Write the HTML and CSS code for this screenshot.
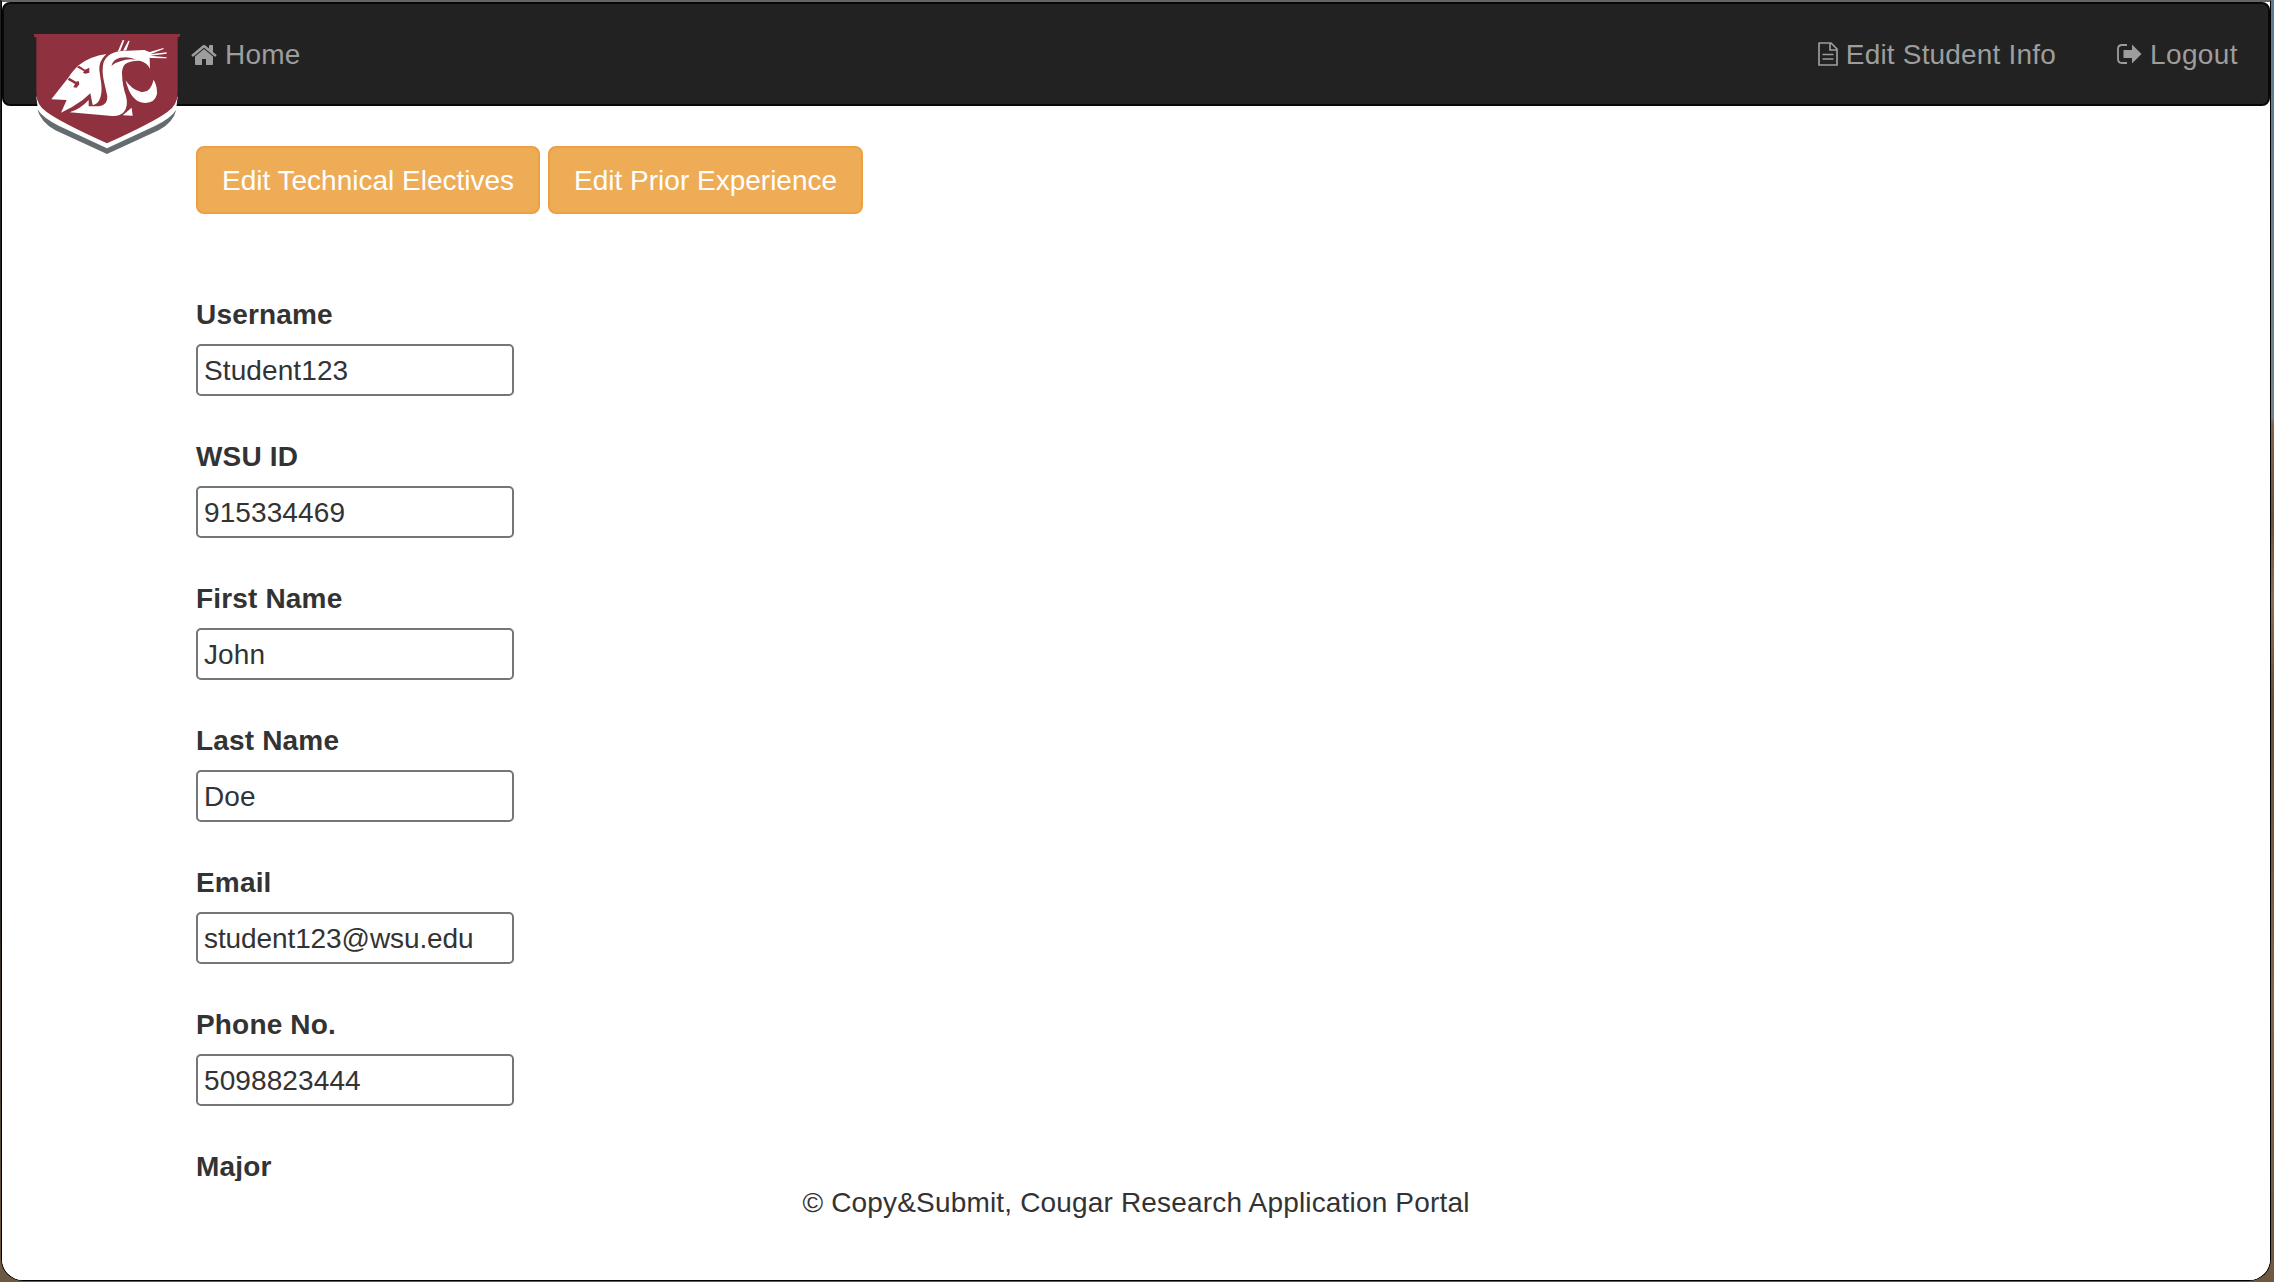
FILE: index.html
```html
<!DOCTYPE html>
<html lang="en">
<head>
<meta charset="utf-8">
<title>Edit Student Info</title>
<link rel="stylesheet" href="styles.css">
</head>
<body>
<div class="window">
  <nav class="navbar">
    <a class="brand" href="#">
      <svg class="logo" viewBox="0 0 465 405">
        <path fill="#fff" d="M19 215L24 255Q60 310 232 374Q402 310 438 255L443 215Z"/>
        <path fill="#90313f" d="M12 27H450V35L443 37V203Q443 240 412 261Q370 292 231 355Q92 292 50 261Q19 240 19 203V37L12 35Z"/>
        <path fill="#656c70" d="M22 253Q40 280 86 302L231 370L376 302Q422 280 439 254Q430 292 386 316L231 387L76 316Q32 292 22 253Z"/>
        <g fill="#fff">
          <path d="M64 223L116 157Q126 139 147 120Q180 94 229 87Q206 109 208 135L214 178Q217 207 208 225Q201 238 188 240L181 205L158 225Q130 246 93 263L110 225Z"/>
          <path d="M263 80L278 45L283 46L271 77ZM279 77L295 47L299 48L289 76Z"/>
          <path d="M244 86Q262 76 292 77L343 75L360 82L359 101L360 131Q352 113 329 107Q300 106 285 118Q276 127 276 146Q277 181 288 213Q296 244 281 262Q270 274 247 273L119 262Q150 253 176 225V244H207Q233 242 232 214L222 170Q214 136 221 111Q228 94 244 86Z"/>
          <path d="M287 166Q304 194 334 201Q361 205 371 164Q382 183 381 207Q375 233 346 234Q302 233 287 166ZM278 271L305 248L308 272Z"/>
          <path d="M352 83L400 69L401 72L361 88L410 82V86L361 92L410 97V100L360 99Z"/>
        </g>
        <g fill="#90313f">
          <path d="M244 123Q248 104 270 98Q300 93 318 104Q289 101 274 108Q254 113 244 123Z"/>
          <path d="M113 164L118 158L138 170L146 168L148 178L140 188L130 187L135 177Z"/>
          <path d="M141 127L147 122L165 134L178 128V143L167 146L159 144L162 139Z"/>
        </g>
      </svg>
    </a>
    <a class="nav-link home" href="#">
      <svg class="icon-home" viewBox="0 0 1664 1792"><path d="M1408 992v480q0 26-19 45t-45 19h-384v-384h-256v384h-384q-26 0-45-19t-19-45v-480q0-1 .5-3t.5-3l575-474 575 474q1 2 1 6zm223-69l-62 74q-8 9-21 11h-3q-13 0-21-7l-692-577-692 577q-12 8-24 7-13-2-21-11l-62-74q-8-10-7-23.5t11-21.5l719-599q32-26 76-26t76 26l244 204v-195q0-14 9-23t23-9h192q14 0 23 9t9 23v408l219 182q10 8 11 21.5t-7 23.5z"/></svg>
      <span>Home</span>
    </a>
    <div class="nav-right">
      <a class="nav-link" href="#">
        <svg class="icon-file" viewBox="0 0 20 24"><path fill="none" stroke="currentColor" stroke-width="1.7" stroke-linejoin="round" d="M1 1h12l6 6v16H1zM12 1v7h7M4.500 12.500h11M4.500 17h11"/></svg>
        <span>Edit Student Info</span>
      </a>
      <a class="nav-link" href="#">
        <svg class="icon-out" viewBox="0 0 25 20"><path fill="none" stroke="currentColor" stroke-width="1.8" d="M10 1H5Q1 1 1 5v10q0 4 4 4h5"/><path d="M6.500 6h8.500V.5l9.500 9.500-9.500 9.500v-5.500H6.500z"/></svg>
        <span class="logout">Logout</span>
      </a>
    </div>
  </nav>
  <main class="content">
    <div class="actions">
      <a class="btn" href="#">Edit Technical Electives</a>
      <a class="btn" href="#">Edit Prior Experience</a>
    </div>
    <form class="fields">
      <div class="field"><label for="username">Username</label><input id="username" value="Student123"></div>
      <div class="field"><label for="wsuid">WSU ID</label><input id="wsuid" value="915334469"></div>
      <div class="field"><label for="first">First Name</label><input id="first" value="John"></div>
      <div class="field"><label for="last">Last Name</label><input id="last" value="Doe"></div>
      <div class="field"><label for="email">Email</label><input id="email" class="email" value="student123@wsu.edu"></div>
      <div class="field"><label for="phone">Phone No.</label><input id="phone" value="5098823444"></div>
      <div class="field"><label>Major</label></div>
    </form>
  </main>
  <footer class="footer">© Copy&amp;Submit, Cougar Research Application Portal</footer>
</div>
</body>
</html>
```
FILE: styles.css
```css
* { box-sizing: border-box; }

body {
  margin: 0;
  height: 1282px;
  padding: 0 3px 1px 1px;
  overflow: hidden;
  background:
    linear-gradient(#222 0, #2b2622 900px, #6d5942 1230px) left / 1px 100% no-repeat,
    linear-gradient(#5f7b91 0, #72848b 418px, #80664f 424px, #6b543d 520px, #8a7150 600px, #66503a 700px, #80664a 1000px, #6d5942 1282px);
  font: 28px/40px "Liberation Sans", Arial, sans-serif;
  color: #333;
}

.window {
  display: flex;
  flex-direction: column;
  height: 1281px;
  overflow: hidden;
  background: #fff;
  border: 1px solid #000;
  border-top: 2px solid #666;
  border-radius: 0 0 22px 22px;
}

.navbar {
  display: flex;
  flex: none;
  height: 104px;
  background: #222;
  border: 2px solid #080808;
  border-radius: 8px;
}

.brand {
  width: 155px;
  height: 135px;
  margin: 21px 0 0 26px;
}

.logo { display: block; width: 155px; height: 135px; }

.nav-link {
  display: flex;
  align-items: center;
  height: 40px;
  margin-top: 30px;
  color: #9d9d9d;
  text-decoration: none;
  letter-spacing: 0.18px;
  white-space: nowrap;
}

.nav-link span { padding-top: 2px; }
.nav-link svg { fill: currentColor; }
.home { margin-left: 6px; }
.icon-home { width: 26px; height: 28px; margin: 2px 8px 0 0; }
.icon-file { width: 20px; height: 24px; margin-right: 8px; }
.icon-out { width: 25px; height: 20px; margin-right: 8px; }
.nav-link .logout { letter-spacing: 0.4px; }

.nav-right {
  display: flex;
  gap: 61px;
  margin-left: auto;
  padding-right: 30px;
}

.content {
  flex: 1;
  min-height: 0;
  padding: 40px 194px 0;
  overflow: hidden;
}

.actions { display: flex; gap: 8px; }

.btn {
  height: 68px;
  padding: 13px 24px 11px;
  border: 2px solid #eca041;
  border-radius: 8px;
  background: #eeac57;
  color: #fff;
  text-decoration: none;
}

.fields { margin-top: 80px; }

.field { height: 142px; }

label {
  display: block;
  height: 40px;
  margin-bottom: 10px;
  padding-top: 1px;
  font-weight: bold;
  letter-spacing: 0.17px;
}

input {
  display: block;
  width: 318px;
  height: 52px;
  padding: 4px 6px 2px;
  border: 2px solid #767676;
  border-radius: 5px;
  font: inherit;
  letter-spacing: 0.1px;
  color: inherit;
}

.email { letter-spacing: -0.1px; }

.footer {
  flex: none;
  height: 99px;
  padding-top: 2px;
  background: #fff;
  letter-spacing: 0.17px;
  text-align: center;
}
```
